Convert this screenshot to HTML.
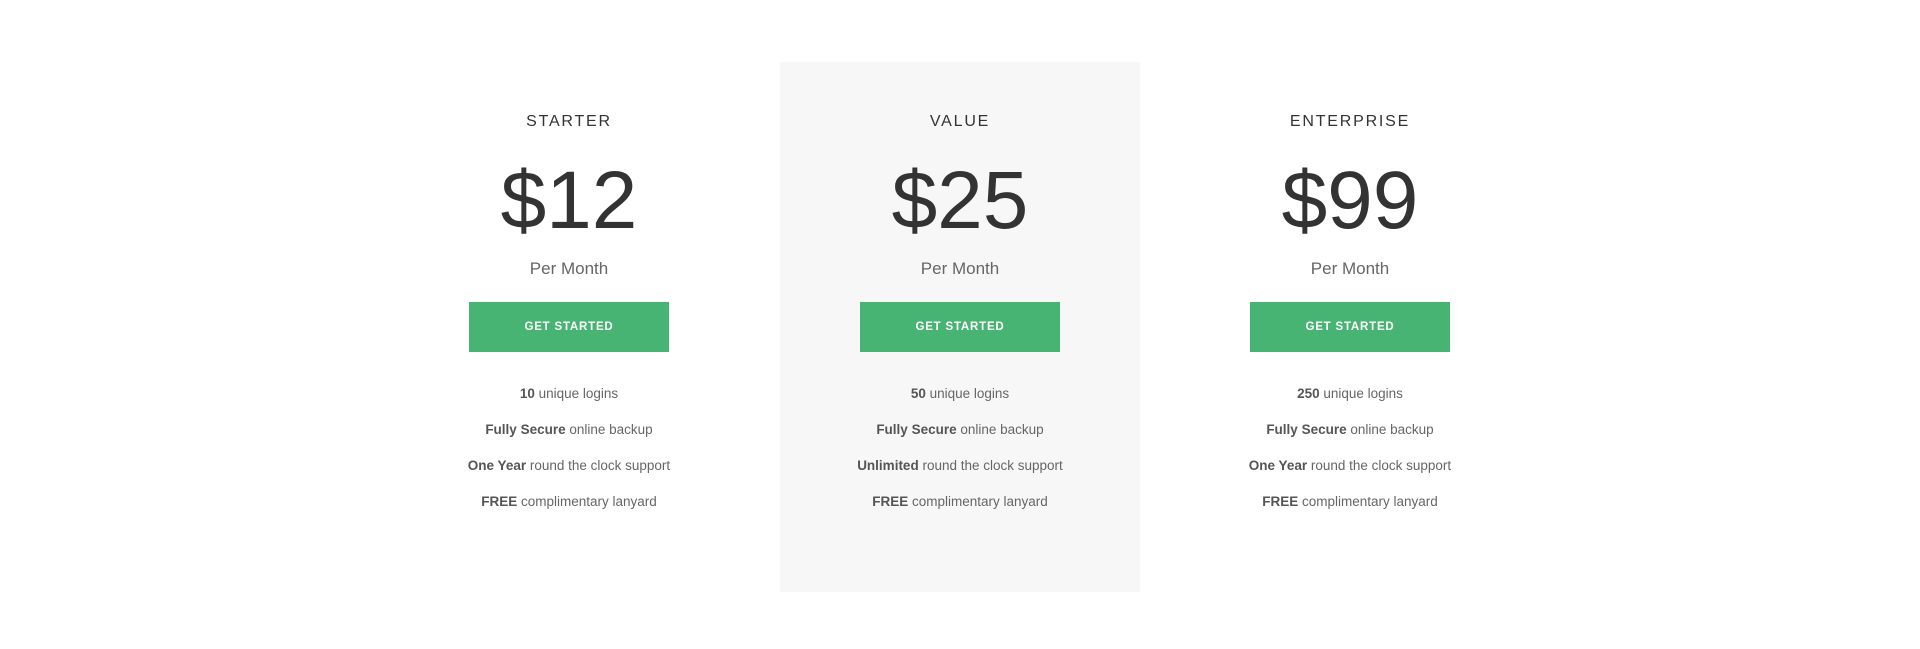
<!DOCTYPE html>
<html><head><meta charset="utf-8"><style>
html,body{margin:0;padding:0;background:#fff;width:1920px;height:649px;overflow:hidden;font-family:"Liberation Sans",sans-serif;}
.col{position:absolute;top:62px;width:360px;height:530px;text-align:center;}
.col.hl{background:#f7f7f7;}
.t{position:absolute;top:49px;left:0;right:0;font-size:16px;letter-spacing:1.8px;color:#333;line-height:22px;}
.p{position:absolute;top:89px;left:0;right:0;font-size:82px;font-weight:300;color:#333;line-height:100px;letter-spacing:0px;}
.m{position:absolute;top:195px;left:0;right:0;font-size:17px;color:#666;line-height:24px;}
.b{position:absolute;top:240px;left:80px;width:200px;height:50px;background:#48b474;color:#fff;font-size:11.5px;font-weight:bold;letter-spacing:0.8px;line-height:50px;}
.f{position:absolute;left:0;right:0;font-size:13.5px;color:#666;line-height:20px;}
.f b{color:#555;}
</style></head><body>
<div class="col" style="left:389px">
<div class="t">STARTER</div><div class="p">$12</div><div class="m">Per Month</div><div class="b">GET STARTED</div>
<div class="f" style="top:322px"><b>10</b> unique logins</div>
<div class="f" style="top:358px"><b>Fully Secure</b> online backup</div>
<div class="f" style="top:394px"><b>One Year</b> round the clock support</div>
<div class="f" style="top:430px"><b>FREE</b> complimentary lanyard</div>
</div>
<div class="col hl" style="left:780px">
<div class="t">VALUE</div><div class="p">$25</div><div class="m">Per Month</div><div class="b">GET STARTED</div>
<div class="f" style="top:322px"><b>50</b> unique logins</div>
<div class="f" style="top:358px"><b>Fully Secure</b> online backup</div>
<div class="f" style="top:394px"><b>Unlimited</b> round the clock support</div>
<div class="f" style="top:430px"><b>FREE</b> complimentary lanyard</div>
</div>
<div class="col" style="left:1170px">
<div class="t">ENTERPRISE</div><div class="p">$99</div><div class="m">Per Month</div><div class="b">GET STARTED</div>
<div class="f" style="top:322px"><b>250</b> unique logins</div>
<div class="f" style="top:358px"><b>Fully Secure</b> online backup</div>
<div class="f" style="top:394px"><b>One Year</b> round the clock support</div>
<div class="f" style="top:430px"><b>FREE</b> complimentary lanyard</div>
</div>
</body></html>
